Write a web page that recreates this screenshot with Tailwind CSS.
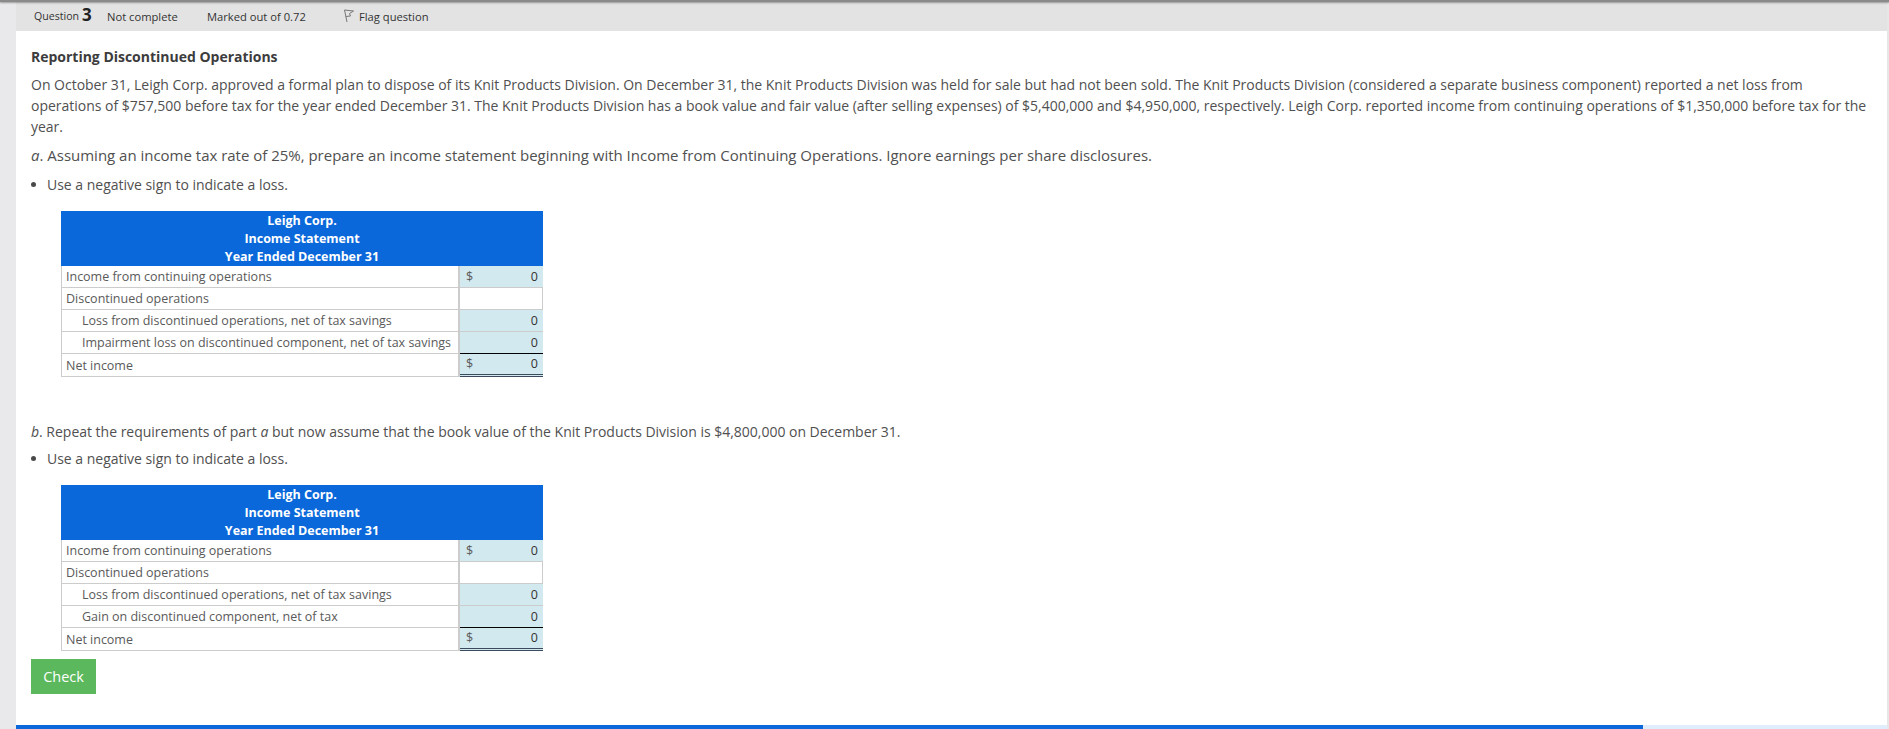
<!DOCTYPE html>
<html>
<head>
<meta charset="utf-8">
<script src="https://cdn.jsdelivr.net/npm/@tailwindcss/browser@4"></script>
</head>
<body class="bg-white">
<div class="h-[729px] w-[1889px] overflow-hidden flex flex-col font-['Open_Sans',sans-serif] text-[#505050] text-[14px] leading-[21px] relative">
  <div class="absolute top-0 left-0 right-0 h-[2px] bg-[#8a8a8a] z-10 shadow-[0_1px_2px_rgba(0,0,0,0.35)]"></div>
  <div class="flex flex-1 min-h-0">
    <div class="w-[16px] shrink-0 bg-[#e9e9ec]"></div>
    <div class="flex-1 flex flex-col min-w-0">
      <div class="h-[31px] shrink-0 bg-[#e3e3e3] flex items-center pt-[1px] pl-[18px] text-[11.2px] text-[#333]">
        <span class="flex items-center w-[73px] text-[10.6px]">Question <b class="text-[17px] font-bold text-[#222] ml-[3px] leading-[17px] -mt-[3px]">3</b></span>
        <span class="w-[100px]">Not complete</span>
        <span class="w-[136px]">Marked out of 0.72</span>
        <svg class="w-[12px] h-[14px] mr-[4px]" viewBox="0 0 12 14" fill="none" stroke="#777" stroke-width="1"><path d="M1.500 1 L4 13 M1.500 1 L10.500 2 L6.500 4.500 L7.500 7 L2.800 7.500"/></svg>
        <span>Flag question</span>
      </div>
      <div class="flex-1 min-h-0 pl-[15px] pr-[17px] pt-[15px] flex flex-col items-start tracking-[-0.012px]">
        <h2 class="font-bold text-[14px] leading-[21px] text-[#3c3c3c] mb-[7px]">Reporting Discontinued Operations</h2>
        <p class="w-full">On October 31, Leigh Corp. approved a formal plan to dispose of its Knit Products Division. On December 31, the Knit Products Division was held for sale but had not been sold. The Knit Products Division (considered a separate business component) reported a net loss from operations of $757,500 before tax for the year ended December 31. The Knit Products Division has a book value and fair value (after selling expenses) of $5,400,000 and $4,950,000, respectively. Leigh Corp. reported income from continuing operations of $1,350,000 before tax for the year.</p>
        <p class="mt-[8px] text-[15px]"><i>a</i>. Assuming an income tax rate of 25%, prepare an income statement beginning with Income from Continuing Operations. Ignore earnings per share disclosures.</p>
        <ul class="mt-[8px] flex items-center">
          <li class="flex items-center"><span class="w-[5px] h-[5px] rounded-full bg-[#4a4a4a] mr-[11px]"></span>Use a negative sign to indicate a loss.</li>
        </ul>
        <div class="mt-[16px] ml-[30px] w-[482px] text-[12.5px] leading-[18px] text-[#5a5a5a]">
          <div class="h-[55px] bg-[#0a68da] text-white font-bold text-center pt-[1px]">
            <div>Leigh Corp.</div><div>Income Statement</div><div>Year Ended December 31</div>
          </div>
          <div class="border-l border-[#ccc]">
            <div class="flex h-[22px] border-b border-[#ccc]"><div class="w-[398px] pl-[4px] leading-[21px] border-r-2 border-[#ccc]">Income from continuing operations</div><div class="flex-1 bg-[#d3e9f0] flex justify-between pl-[6px] pr-[5px] leading-[21px]"><span>$</span><span class="text-[#333]">0</span></div></div>
            <div class="flex h-[22px] border-b border-[#ccc]"><div class="w-[398px] pl-[4px] leading-[21px] border-r-2 border-[#ccc]">Discontinued operations</div><div class="flex-1 border-r border-[#ccc]"></div></div>
            <div class="flex h-[22px] border-b border-[#ccc]"><div class="w-[398px] pl-[20px] leading-[21px] border-r-2 border-[#ccc]">Loss from discontinued operations, net of tax savings</div><div class="flex-1 bg-[#d3e9f0] text-right px-[5px] leading-[21px] text-[#333]">0</div></div>
            <div class="flex h-[22px] border-b border-[#ccc]"><div class="w-[398px] pl-[20px] leading-[21px] border-r-2 border-[#ccc]">Impairment loss on discontinued component, net of tax savings</div><div class="flex-1 bg-[#d3e9f0] text-right px-[5px] leading-[21px] text-[#333]">0</div></div>
            <div class="flex h-[24px] -mt-[1px]"><div class="w-[398px] pl-[4px] pt-[1px] leading-[21px] border-t border-b border-[#ccc] border-r-2 border-r-[#ccc]">Net income</div><div class="flex-1 bg-[#d3e9f0] border-t border-t-black border-b-[3px] border-double border-b-[#3b4a5c] flex justify-between pl-[6px] pr-[5px] leading-[20px]"><span>$</span><span class="text-[#333]">0</span></div></div>
          </div>
        </div>
        <p class="mt-[44px]"><i>b</i>. Repeat the requirements of part <i>a</i> but now assume that the book value of the Knit Products Division is $4,800,000 on December 31.</p>
        <ul class="mt-[6px] flex items-center">
          <li class="flex items-center"><span class="w-[5px] h-[5px] rounded-full bg-[#4a4a4a] mr-[11px]"></span>Use a negative sign to indicate a loss.</li>
        </ul>
        <div class="mt-[16px] ml-[30px] w-[482px] text-[12.5px] leading-[18px] text-[#5a5a5a]">
          <div class="h-[55px] bg-[#0a68da] text-white font-bold text-center pt-[1px]">
            <div>Leigh Corp.</div><div>Income Statement</div><div>Year Ended December 31</div>
          </div>
          <div class="border-l border-[#ccc]">
            <div class="flex h-[22px] border-b border-[#ccc]"><div class="w-[398px] pl-[4px] leading-[21px] border-r-2 border-[#ccc]">Income from continuing operations</div><div class="flex-1 bg-[#d3e9f0] flex justify-between pl-[6px] pr-[5px] leading-[21px]"><span>$</span><span class="text-[#333]">0</span></div></div>
            <div class="flex h-[22px] border-b border-[#ccc]"><div class="w-[398px] pl-[4px] leading-[21px] border-r-2 border-[#ccc]">Discontinued operations</div><div class="flex-1 border-r border-[#ccc]"></div></div>
            <div class="flex h-[22px] border-b border-[#ccc]"><div class="w-[398px] pl-[20px] leading-[21px] border-r-2 border-[#ccc]">Loss from discontinued operations, net of tax savings</div><div class="flex-1 bg-[#d3e9f0] text-right px-[5px] leading-[21px] text-[#333]">0</div></div>
            <div class="flex h-[22px] border-b border-[#ccc]"><div class="w-[398px] pl-[20px] leading-[21px] border-r-2 border-[#ccc]">Gain on discontinued component, net of tax</div><div class="flex-1 bg-[#d3e9f0] text-right px-[5px] leading-[21px] text-[#333]">0</div></div>
            <div class="flex h-[24px] -mt-[1px]"><div class="w-[398px] pl-[4px] pt-[1px] leading-[21px] border-t border-b border-[#ccc] border-r-2 border-r-[#ccc]">Net income</div><div class="flex-1 bg-[#d3e9f0] border-t border-t-black border-b-[3px] border-double border-b-[#3b4a5c] flex justify-between pl-[6px] pr-[5px] leading-[20px]"><span>$</span><span class="text-[#333]">0</span></div></div>
          </div>
        </div>
        <button class="mt-[8px] h-[35px] w-[65px] bg-[#5cb85c] text-white text-[14.5px]">Check</button>
      </div>
      <div class="h-[4px] shrink-0 flex bg-[#e0edfd]"><div class="w-[1627px] bg-[#0a68da]"></div></div>
    </div>
    <div class="w-[2px] shrink-0 bg-[#e6e6e6]"></div>
  </div>
</div>
</body>
</html>
